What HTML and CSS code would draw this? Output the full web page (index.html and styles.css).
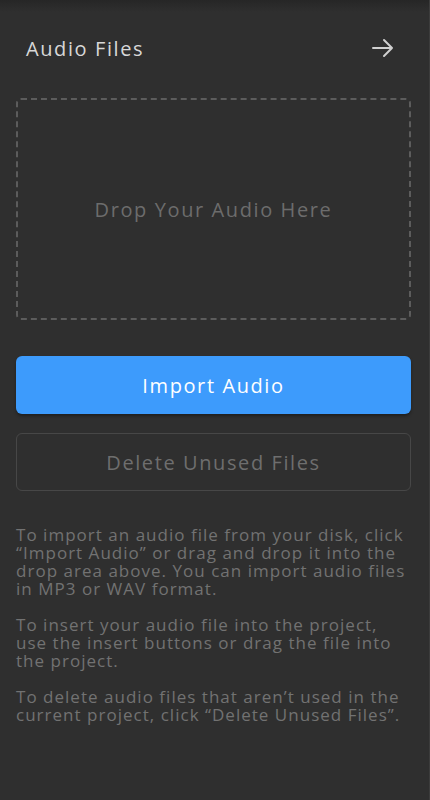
FILE: index.html
```html
<!DOCTYPE html>
<html lang="en">
  <head>
    <meta charset="UTF-8" />
    <meta name="viewport" content="width=device-width, initial-scale=1.0" />
    <title>Audio Files</title>
    <link rel="stylesheet" href="styles.css">
  </head>
  <body>
    <div class="panel">
      <div class="header">
        <h2>Audio Files</h2>
        <svg class="close" width="24" height="24" viewBox="0 0 24 24">
          <path d="M2 12H21M13 4l8 8-8 8" fill="none" stroke="#d0d0d0" stroke-width="2" stroke-linecap="round" stroke-linejoin="round" />
        </svg>
      </div>
      <div class="dropzone">Drop Your Audio Here</div>
      <button class="btn primary">Import Audio</button>
      <button class="btn ghost">Delete Unused Files</button>
      <div class="help">
        <p>To import an audio file from your disk, click “Import Audio” or drag and drop it into the drop area above. You can import audio files in MP3 or WAV format.</p>
        <p>To insert your audio file into the project, use the insert buttons or drag the file into the project.</p>
        <p>To delete audio files that aren’t used in the current project, click “Delete Unused Files”.</p>
      </div>
    </div>
  </body>
</html>
```

FILE: styles.css
```css
* {
  margin: 0;
  padding: 0;
  box-sizing: border-box;
}
body {
  background: #2f2f2f;
  font-family: "Open Sans", "Liberation Sans", sans-serif;
}
.panel {
  height: 800px;
  padding: 0 18px 0 16px;
  border-right: 1px solid #3c3c3c;
  background: linear-gradient(#262626, #2f2f2f 12px);
  display: flex;
  flex-direction: column;
}
.header {
  height: 98px;
  display: flex;
  align-items: center;
  justify-content: space-between;
  padding: 0 0 2px 10px;
}
.header h2 {
  font-size: 20px;
  font-weight: 400;
  letter-spacing: 0.08em;
  color: #d8d8d8;
}
.close {
  margin-right: 16px;
}
.dropzone {
  height: 222px;
  border: 2px dashed #5c5c5c;
  border-radius: 5px;
  display: flex;
  align-items: center;
  justify-content: center;
  font-size: 20px;
  letter-spacing: 0.08em;
  color: #6c6c6c;
}
.btn {
  height: 58px;
  border-radius: 6px;
  font-family: inherit;
  font-size: 20px;
  letter-spacing: 0.08em;
  cursor: pointer;
}
.primary {
  margin-top: 36px;
  border: none;
  background: #3d9bfc;
  color: #fff;
  box-shadow: 0 2px 3px rgba(0, 0, 0, 0.35);
}
.ghost {
  margin-top: 19px;
  border: 1px solid #474747;
  background: transparent;
  color: #6e6e6e;
}
.help {
  margin-top: 35px;
  font-size: 17px;
  letter-spacing: 0.06em;
  line-height: 18px;
  color: #727272;
}
.help p {
  margin-bottom: 18px;
}
```
